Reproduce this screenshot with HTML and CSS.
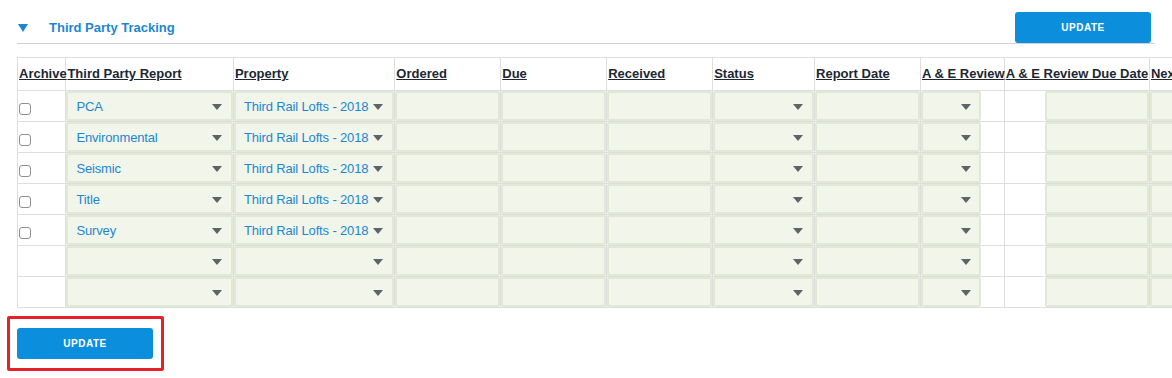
FILE: index.html
```html
<!DOCTYPE html>
<html lang="en">
<head>
  <meta charset="UTF-8" />
  <title>Third Party Tracking</title>
  <link rel="stylesheet" href="styles.css">
</head>
<body>
  <div class="panel">
    <!-- section header -->
    <div class="section-head">
      <span class="toggle"></span>
      <h2 class="section-title">Third Party Tracking</h2>
      <button class="btn-update">UPDATE</button>
    </div>

    <!-- tracking table -->
    <div class="table-wrap">
      <table class="tracking">
        <colgroup>
          <col class="c-archive">
          <col class="c-report">
          <col class="c-property">
          <col class="c-date">
          <col class="c-date">
          <col class="c-date">
          <col class="c-status">
          <col class="c-date">
          <col class="c-review">
          <col class="c-review-due">
          <col class="c-date">
        </colgroup>
        <thead>
          <tr>
            <th>Archive</th>
            <th>Third Party Report</th>
            <th>Property</th>
            <th>Ordered</th>
            <th>Due</th>
            <th>Received</th>
            <th>Status</th>
            <th>Report Date</th>
            <th>A &amp; E Review</th>
            <th>A &amp; E Review Due Date</th>
            <th>Next Review</th>
          </tr>
        </thead>
        <tbody id="rows"></tbody>
      </table>
    </div>

    <div class="highlight">
      <button class="btn-update">UPDATE</button>
    </div>
  </div>

  <script>
    const reports = ['PCA', 'Environmental', 'Seismic', 'Title', 'Survey', '', ''];
    const property = 'Third Rail Lofts - 2018';

    const select = (text, extra = '') =>
      `<div class="select ${extra}"><select><option>${text}</option></select></div>`;
    const field = (extra = '') => `<input type="text" class="field ${extra}">`;

    const buildRow = (report) => {
      const filled = report !== '';
      return `<tr>
        <td class="archive">${filled ? '<input type="checkbox" class="check">' : ''}</td>
        <td>${select(report)}</td>
        <td>${select(filled ? property : '')}</td>
        <td>${field()}</td>
        <td>${field()}</td>
        <td>${field()}</td>
        <td>${select('')}</td>
        <td>${field()}</td>
        <td>${select('', 'select-small')}</td>
        <td class="due-cell">${field('field-small')}</td>
        <td>${field()}</td>
      </tr>`;
    };

    document.querySelector('#rows').innerHTML = reports.map(buildRow).join('');
  </script>
</body>
</html>
```

FILE: styles.css
```css
body {
  margin: 0;
  font-family: "Liberation Sans", Arial, Helvetica, sans-serif;
  font-size: 13px;
  color: #1c2733;
  background: #fff;
}
.panel {
  padding: 12px 0 0 17px;
  overflow: hidden;
}

/* section header */
.section-head {
  display: flex;
  align-items: center;
  width: 1134px;
  padding-right: 4px;
  border-bottom: 1px solid #cfcfcf;
}
.toggle {
  width: 0;
  height: 0;
  margin-left: 1px;
  border-left: 5px solid transparent;
  border-right: 5px solid transparent;
  border-top: 8px solid #1b87d1;
}
.section-title {
  margin: 0 0 0 21px;
  font-size: 13px;
  font-weight: bold;
  color: #1b87d1;
  flex: 1;
}
.btn-update {
  width: 136px;
  height: 31px;
  border: none;
  border-radius: 3px;
  background: #0b8fdc;
  color: #fff;
  font-family: "Liberation Sans", Arial, sans-serif;
  font-size: 10px;
  font-weight: bold;
  letter-spacing: 0.5px;
  cursor: pointer;
}

/* table */
.table-wrap {
  margin-top: 13px;
  width: 1155px;
  overflow: hidden;
}
.tracking {
  border-collapse: collapse;
  table-layout: fixed;
  width: 1239px;
}
.c-archive { width: 48px; }
.c-report { width: 166px; }
.c-property { width: 160px; }
.c-date { width: 105px; }
.c-status { width: 101px; }
.c-review { width: 83px; }
.c-review-due { width: 144px; }

.tracking th,
.tracking td {
  border: 1px solid #dedede;
  padding: 0;
}
.tracking th {
  height: 23px;
  padding: 0 0 9px 1px;
  vertical-align: bottom;
  text-align: left;
  white-space: nowrap;
  text-decoration: underline;
  font-weight: bold;
  color: #1c2733;
}
.tracking td {
  height: 30px;
  vertical-align: middle;
}
.tracking td.archive {
  vertical-align: bottom;
  padding: 0 0 6px 1px;
  height: 24px;
}
.tracking td.due-cell {
  text-align: right;
}

.check {
  appearance: none;
  -webkit-appearance: none;
  display: block;
  width: 12px;
  height: 12px;
  margin: 0;
  border: 1px solid #8f8f8f;
  border-radius: 3px;
  background: #fff;
}

/* inputs and selects */
.field,
.select select {
  display: block;
  box-sizing: border-box;
  width: 100%;
  height: 30px;
  margin: 0;
  border: 2px solid #e1e8d6;
  border-radius: 2px;
  background: #f1f5ea;
  font-family: "Liberation Sans", Arial, sans-serif;
  font-size: 13px;
  color: #1b87d1;
  outline: none;
}
.field-small {
  display: inline-block;
  width: 104px;
  vertical-align: middle;
}
.select {
  position: relative;
}
.select select {
  appearance: none;
  -webkit-appearance: none;
  padding: 0 14px 0 8px;
  letter-spacing: -0.15px;
}
.select::after {
  content: "";
  position: absolute;
  right: 11px;
  top: 13px;
  border-left: 5px solid transparent;
  border-right: 5px solid transparent;
  border-top: 6px solid #5d6369;
}
.select-small {
  width: 60px;
}
.select-small::after {
  right: 10px;
}

/* highlighted bottom button */
.highlight {
  display: inline-block;
  margin: 8px 0 0 -10px;
  padding: 9px 8px 9px 7px;
  border: 3px solid #e8202a;
  border-radius: 2px;
}
.highlight .btn-update {
  display: block;
}
```
